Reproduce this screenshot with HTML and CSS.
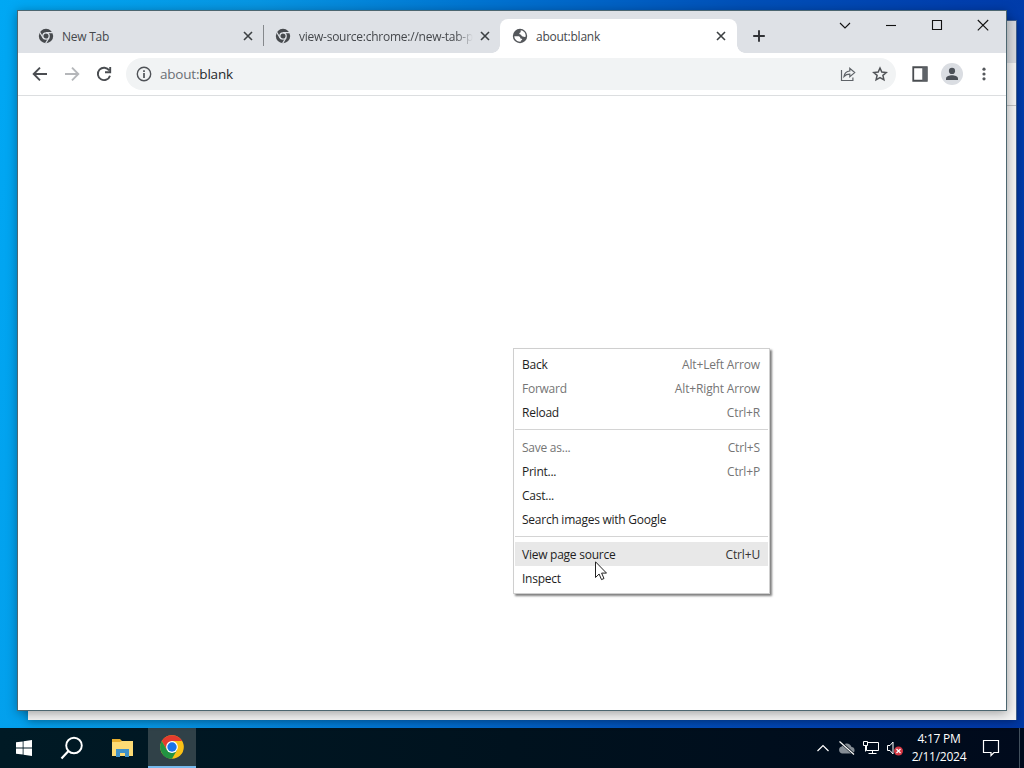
FILE: index.html
```html
<!DOCTYPE html>
<html lang="en">
<head>
  <meta charset="UTF-8" />
  <meta name="viewport" content="width=device-width, initial-scale=1.0"/>
  <title>about:blank</title>
  <link rel="stylesheet" href="styles.css">
</head>
<body>
  <svg class="defs" width="0" height="0">
    <symbol id="chrome-mono" viewBox="0 0 16 16">
      <circle cx="8" cy="8" r="7.2" fill="#474a4e"/>
      <circle cx="8" cy="8" r="3.2" fill="none" stroke="#dee1e6" stroke-width="1.3"/>
      <path d="M8 4.700h7M5 9.800L1.600 4M11 9.700L7.600 15.400" stroke="#dee1e6" stroke-width="1.2"/>
    </symbol>
    <symbol id="close" viewBox="0 0 16 16">
      <path d="M4 4l8 8M12 4l-8 8" stroke="#3c4043" stroke-width="1.6"/>
    </symbol>
  </svg>

  <div class="desktop">
    <!-- window behind -->
    <div class="back-window">
      <div class="back-strip"></div>
      <div class="back-toolbar"></div>
    </div>

    <div class="window">
      <div class="tab-strip">
        <div class="tab first">
          <svg class="favicon"><use href="#chrome-mono"/></svg>
          <span class="tab-title">New Tab</span>
          <svg class="tab-close"><use href="#close"/></svg>
        </div>
        <div class="tab">
          <svg class="favicon"><use href="#chrome-mono"/></svg>
          <span class="tab-title fade">view-source:chrome://new-tab-p</span>
          <svg class="tab-close"><use href="#close"/></svg>
        </div>
        <div class="tab active">
          <svg class="favicon" viewBox="0 0 16 16">
            <circle cx="8" cy="8" r="7.2" fill="#54575b"/>
            <path d="M8.700 2.300c2.900.3 5 2.700 5 5.500l-.2.900c-.9.600-1.700-.300-2.700-.300-.9 0-1.500-.500-1.500-1.400 0-.6-1.800-.200-2-1.200-.2-1 1.100-1.100 1.400-1.900.2-.600-.2-1 0-1.600z" fill="#fff"/>
            <path d="M2.300 8.300h3.500c1.500 0 2.500.6 2.500 1.700 0 .8.700.600 1.500.700.7.200.400 1-.1 1.400-.6.5-1.100.9-1.200 1.600-3.300.2-6.100-2.200-6.200-5.400z" fill="#fff"/>
          </svg>
          <span class="tab-title">about:blank</span>
          <svg class="tab-close"><use href="#close"/></svg>
        </div>
        <svg class="new-tab" viewBox="0 0 16 16"><path d="M8 2.200v11.600M2.200 8h11.600" stroke="#303236" stroke-width="1.9"/></svg>
        <div class="controls">
          <svg class="chevron" viewBox="0 0 46 28"><path d="M18 12l5 5 5-5"/></svg>
          <svg viewBox="0 0 46 28"><path d="M18 14.500h10"/></svg>
          <svg viewBox="0 0 46 28"><path d="M18.500 9.500h9v9h-9z"/></svg>
          <svg viewBox="0 0 46 28"><path d="M17.800 9l10.400 10.400M28.200 9L17.800 19.400"/></svg>
        </div>
      </div>

      <div class="toolbar">
        <svg class="tool" viewBox="0 0 16 16"><path d="M15 8H2M8 1.700L1.700 8 8 14.300" stroke="#4a4d51"/></svg>
        <svg class="tool" viewBox="0 0 16 16"><path d="M1 8h13M8 1.700L14.300 8 8 14.300" stroke="#b5b7ba"/></svg>
        <svg class="tool" viewBox="0 0 16 16"><path d="M13.200 4.400A6.200 6.200 0 1 0 14 9.700M14.200 1v5.200H9" stroke="#4a4d51"/></svg>
        <div class="omnibox">
          <svg class="info" viewBox="0 0 16 16">
            <circle cx="8" cy="8" r="6.700" fill="none" stroke="#4f5257" stroke-width="1.4"/>
            <path d="M8 7v5M8 4.200v1.700" stroke="#4f5257" stroke-width="1.7"/>
          </svg>
          <span class="url"><span class="scheme">about:</span>blank</span>
          <svg class="share" viewBox="0 0 16 16">
            <path d="M1.500 4v10.500h11.400v-3M4 10.500C4.500 7 6.500 5.200 9.800 5V2.400l4.900 4.200-4.900 4.200V8.200C7.300 8.200 5.500 8.900 4 10.500z" fill="none" stroke="#5f6368" stroke-width="1.2"/>
          </svg>
          <svg class="star" viewBox="0 0 16 16">
            <path d="M8 2l1.800 4.100 4.500.4-3.400 2.900 1 4.400L8 11.500l-3.900 2.300 1-4.400L1.700 6.500l4.500-.4z" fill="none" stroke="#505357" stroke-width="1.5"/>
          </svg>
        </div>
        <svg class="panel" viewBox="0 0 16 16"><path d="M2 2h12v12H2z" fill="none" stroke="#4a4d51" stroke-width="1.6"/><path d="M10 2h4.500v12H10z" fill="#5f6368"/></svg>
        <div class="avatar">
          <svg viewBox="0 0 16 16"><circle cx="8" cy="4.900" r="3.1"/><path d="M2 14v-1.600C2 10.300 5.500 9.200 8 9.200s6 1.100 6 3.200V14z"/></svg>
        </div>
        <svg class="more" viewBox="0 0 16 16"><circle cx="8" cy="3.200" r="1.6"/><circle cx="8" cy="8" r="1.6"/><circle cx="8" cy="12.800" r="1.6"/></svg>
      </div>
      <div class="page"></div>
    </div>

    <!-- context menu -->
    <div class="menu">
      <div class="item"><span>Back</span><span class="key">Alt+Left Arrow</span></div>
      <div class="item disabled"><span>Forward</span><span class="key">Alt+Right Arrow</span></div>
      <div class="item"><span>Reload</span><span class="key">Ctrl+R</span></div>
      <div class="separator"></div>
      <div class="item disabled"><span>Save as...</span><span class="key">Ctrl+S</span></div>
      <div class="item"><span>Print...</span><span class="key">Ctrl+P</span></div>
      <div class="item"><span>Cast...</span></div>
      <div class="item"><span>Search images with Google</span></div>
      <div class="separator"></div>
      <div class="item selected"><span>View page source</span><span class="key">Ctrl+U</span></div>
      <div class="item"><span>Inspect</span></div>
    </div>
    <svg class="cursor" viewBox="0 0 12 20"><path d="M.5.8v15.700l3.600-3.500 2.400 5.600 2.500-1.100-2.400-5.400h4.900z" fill="#fff" stroke="#222"/></svg>
  </div>

  <div class="taskbar">
    <div class="task">
      <svg width="16" height="16" viewBox="0 0 16 16"><path d="M0 2.300L6.700 1.400v6.200H0zM7.500 1.300L16 .1v7.500H7.500zM0 8.400h6.700v6.200L0 13.700zM7.500 8.400H16v7.500l-8.500-1.200z" fill="#fff"/></svg>
    </div>
    <div class="task">
      <svg width="24" height="24" viewBox="0 0 24 24"><circle cx="14" cy="9.500" r="7.800" fill="none" stroke="#fff" stroke-width="1.9"/><path d="M8.500 15L1.500 22.500" stroke="#fff" stroke-width="2.2"/></svg>
    </div>
    <div class="task">
      <svg width="24" height="20" viewBox="0 0 24 20">
        <path d="M2 1h8l2 2h11v15H2z" fill="#e8ae2e"/>
        <path d="M2 4h8l2-1h11v15H2z" fill="#fddb74"/>
        <path d="M6 11h13v8h-4v-4h-5v4H6z" fill="#3f91c9"/>
      </svg>
    </div>
    <div class="task running">
      <svg width="24" height="24" viewBox="0 0 24 24">
        <circle cx="12" cy="12" r="11.8" fill="#fbc116"/>
        <path d="M1.780 6.100A11.800 11.800 0 0 1 22.220 6.100H12L6.900 15z" fill="#e33b2e"/>
        <path d="M1.780 6.100A11.800 11.800 0 0 0 12 23.800L17.100 14.950 6.900 14.950z" fill="#229342"/>
        <circle cx="12" cy="12" r="5.9" fill="#fff"/>
        <circle cx="12" cy="12" r="4.7" fill="#1a73e8"/>
      </svg>
    </div>
    <div class="tray">
      <svg width="16" height="16" viewBox="0 0 16 16"><path d="M2.500 11L8 5.500l5.500 5.500" fill="none" stroke="#fff" stroke-width="1.2"/></svg>
      <svg width="18" height="16" viewBox="0 0 18 16"><path d="M4 13.500a3.600 3.600 0 0 1-.3-7A5.400 5.400 0 0 1 13.500 7a3.300 3.300 0 0 1 .5 6.500z" fill="#858d95"/><path d="M2 1.500l14 13" stroke="#06111b" stroke-width="2.4"/><path d="M1.500 1.500l14.500 13" stroke="#fff" stroke-width="1.1"/></svg>
      <svg width="18" height="16" viewBox="0 0 18 16"><path d="M5.500 2.500h11v8h-12V6M6.500 13.500h8M10.500 10.500v3M1.500 1.500h4v4h-4zM3.500 5.500v6" fill="none" stroke="#fff"/></svg>
      <svg width="18" height="16" viewBox="0 0 18 16"><path d="M1.500 5.500H4l3-3.500v12l-3-3.500H1.500z" fill="none" stroke="#fff"/><circle cx="12.500" cy="11" r="4.500" fill="#d53743"/><path d="M10.500 9l4 4M14.500 9l-4 4" stroke="#fff" stroke-width="1.2"/></svg>
    </div>
    <div class="clock"><span>4:17 PM</span><span>2/11/2024</span></div>
    <svg class="notify" width="18" height="18" viewBox="0 0 18 18"><path d="M1.500 1.500h15v12h-4.500l-3 3v-3H1.500z" fill="none" stroke="#fff" stroke-width="1.2"/></svg>
    <div class="show-desktop"></div>
  </div>
</body>
</html>
```
FILE: styles.css
```css
* {
  box-sizing: border-box;
}
body {
  margin: 0;
  width: 1024px;
  height: 768px;
  overflow: hidden;
  display: flex;
  flex-direction: column;
  font-family: "Open Sans", "Noto Sans", sans-serif;
  font-size: 12px;
  letter-spacing: -.25px;
}
svg {
  display: block;
  flex: none;
}
.defs {
  position: absolute;
}

.desktop {
  position: relative;
  height: 728px;
  background: linear-gradient(98deg, #00a8f4 0%, #0795e2 23%, #0070cf 45%, #0050b8 66%, #003fae 85%, #0137a4 100%);
}

/* Windows */
.back-window {
  position: absolute;
  left: 28px;
  top: 20px;
  width: 989px;
  height: 700px;
  background: #f2f2f2;
  border-top: 1px solid #41608c;
  border-right: 1px solid #41608c;
  box-shadow: 0 2px 8px rgba(0, 0, 0, .3);
}
.back-strip {
  height: 42px;
  background: #d5d8dd;
}
.back-toolbar {
  height: 43px;
  border-bottom: 1px solid #bfc1c3;
}
.window {
  position: absolute;
  left: 17px;
  top: 10px;
  width: 990px;
  height: 701px;
  border: 1px solid #4c6670;
  background: #fff;
  display: flex;
  flex-direction: column;
  box-shadow: 0 2px 10px rgba(0, 0, 0, .35);
}

/* Tabs */
.tab-strip {
  height: 42px;
  padding: 8px 0 0 8px;
  background: #dee1e6;
  display: flex;
}
.tab {
  position: relative;
  width: 237px;
  height: 34px;
  padding: 0 7px 0 12px;
  display: flex;
  align-items: center;
  color: #45484c;
}
.tab.first {
  border-right: 1px solid #85888c;
  border-image: linear-gradient(transparent 20%, #85888c 20%, #85888c 78%, transparent 78%) 1;
  border-width: 0 1px 0 0;
  width: 238px;
  margin-right: -1px;
}
.favicon {
  width: 16px;
  height: 16px;
  margin-right: 8px;
}
.tab-title {
  flex: 1;
  white-space: nowrap;
  margin-right: 4px;
}
.fade {
  -webkit-mask-image: linear-gradient(90deg, #000 90%, transparent 100%);
  mask-image: linear-gradient(90deg, #000 90%, transparent 100%);
}
.tab-close {
  width: 16px;
  height: 16px;
}
.tab.active {
  padding-right: 8px;
  background: #fff;
  border-radius: 8px 8px 0 0;
}
.tab.active::before,
.tab.active::after {
  content: "";
  position: absolute;
  bottom: 0;
  width: 8px;
  height: 8px;
}
.tab.active::before {
  left: -8px;
  background: radial-gradient(circle at 0 0, transparent 7.5px, #fff 8px);
}
.tab.active::after {
  right: -8px;
  background: radial-gradient(circle at 100% 0, transparent 7.5px, #fff 8px);
}
.new-tab {
  width: 16px;
  height: 16px;
  margin: 9px 0 0 14px;
}
.controls {
  display: flex;
  margin: -8px 0 0 auto;
}
.controls svg {
  width: 46px;
  height: 28px;
  fill: none;
  stroke: #111;
  stroke-width: 1.1;
}

/* Toolbar */
.toolbar {
  height: 43px;
  padding-left: 14px;
  display: flex;
  align-items: center;
  border-bottom: 1px solid #dcdee0;
}
.tool {
  width: 16px;
  height: 16px;
  margin-right: 16px;
  fill: none;
  stroke-width: 1.9;
}
.omnibox {
  width: 770px;
  height: 32px;
  margin-left: -2px;
  padding: 0 8px 0 10px;
  display: flex;
  align-items: center;
  border-radius: 16px;
  background: #f1f3f4;
}
.info {
  width: 16px;
  height: 16px;
}
.url {
  flex: 1;
  margin-left: 8px;
  font-size: 13.5px;
  letter-spacing: -.2px;
  color: #25282b;
}
.scheme {
  color: #6b6f74;
}
.share {
  width: 16px;
  height: 16px;
  margin-right: 16px;
}
.star {
  width: 16px;
  height: 16px;
}
.panel {
  width: 18px;
  height: 18px;
  margin-left: 15px;
}
.avatar {
  width: 22px;
  height: 22px;
  margin: 0 13px 0 12px;
  border-radius: 50%;
  background: #dadde2;
  display: flex;
  align-items: center;
  justify-content: center;
}
.avatar svg {
  width: 16px;
  height: 16px;
  fill: #4b5057;
}
.more {
  width: 16px;
  height: 16px;
  fill: #55585c;
}
.page {
  flex: 1;
}

/* Context menu */
.menu {
  position: absolute;
  left: 513px;
  top: 348px;
  width: 257px;
  height: 246px;
  padding: 3px 1px;
  border: 1px solid #cfcfcf;
  background: #fff;
  box-shadow: 2px 2px 2px rgba(0, 0, 0, .5);
  color: #1e1e1e;
}
.item {
  height: 24px;
  padding: 1px 8px 0 7px;
  display: flex;
  align-items: center;
  justify-content: space-between;
}
.key,
.disabled {
  color: #757575;
}
.key {
  letter-spacing: -.15px;
}
.selected {
  background: #e8e8e8;
}
.selected .key {
  color: #333;
}
.separator {
  height: 1px;
  margin: 5px 0;
  background: #d4d4d4;
}
.cursor {
  position: absolute;
  left: 595px;
  top: 561px;
  width: 12px;
  height: 20px;
}

/* Taskbar */
.taskbar {
  height: 40px;
  display: flex;
  align-items: center;
  background: linear-gradient(90deg, #001a25, #00121e 50%, #000a1c);
  color: #fff;
}
.task {
  width: 48px;
  height: 40px;
  margin-right: 2px;
  display: flex;
  align-items: center;
  justify-content: center;
}
.task:first-child {
  margin-right: 0;
}
.running {
  background: #304148;
  border-bottom: 2px solid #76b9ed;
}
.tray {
  margin-left: auto;
  display: flex;
  align-items: center;
  gap: 6px;
}
.tray svg:first-child {
  margin-right: 1px;
}
.clock {
  width: 70px;
  display: flex;
  flex-direction: column;
  align-items: center;
  line-height: 18px;
}
.notify {
  margin: 0 19px 0 8px;
}
.show-desktop {
  width: 5px;
  height: 40px;
  border-left: 1px solid #42505d;
}
```
